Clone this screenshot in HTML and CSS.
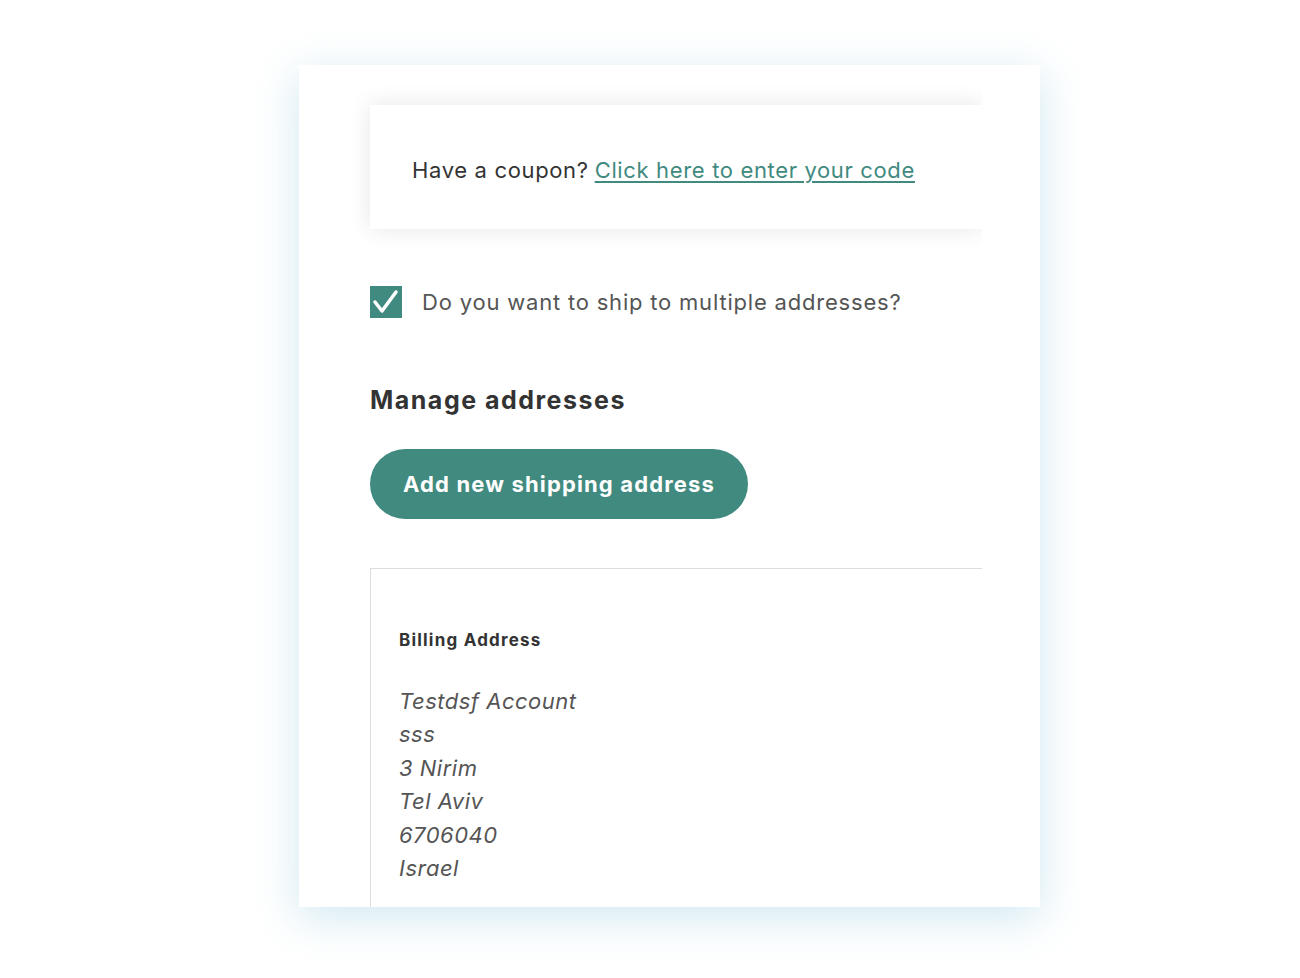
FILE: index.html
```html
<!DOCTYPE html>
<html lang="en">

<head>
  <meta charset="UTF-8">
  <title>Checkout - multiple addresses</title>
  <link rel="stylesheet" href="styles.css">
</head>

<body>
  <div id="frame">
    <div id="content">
      <div class="coupon">
        Have a coupon? <a href="#">Click here to enter your code</a>
      </div>

      <label class="multi">
        <span class="check">
          <svg width="32" height="32" viewBox="0 0 32 32">
            <polyline points="5,16 12,25 26,6" fill="none" stroke="#fff" stroke-width="3.5" stroke-linecap="round" stroke-linejoin="round" />
          </svg>
        </span>
        Do you want to ship to multiple addresses?
      </label>

      <h2>Manage addresses</h2>

      <button class="add">Add new shipping address</button>

      <div class="address">
        <h3>Billing Address</h3>
        <address>
          Testdsf Account<br>
          sss<br>
          3 Nirim<br>
          Tel Aviv<br>
          6706040<br>
          Israel
        </address>
      </div>
    </div>
  </div>
</body>

</html>
```

FILE: styles.css
```css
body {
  --teal: #418a80;
  --text: #555;
  --dark: #333;
  margin: 0;
  padding: 65px 0 71px;
  background: #fff;
  font-family: Inter, "Open Sans", sans-serif;
  color: var(--text);
}

#frame {
  width: 741px;
  height: 842px;
  margin-left: 299px;
  background: #fff;
  overflow: hidden;
  box-shadow: 0 10px 42px rgba(150, 205, 225, 0.45);
}

#content {
  width: 612px;
  height: 100%;
  padding: 40px 0 0 71px;
  overflow: hidden;
}

.coupon {
  width: 612px;
  height: 124px;
  display: flex;
  align-items: center;
  padding: 6px 0 0 42px;
  box-sizing: border-box;
  background: #fff;
  box-shadow: 0 0 22px rgba(0, 0, 0, 0.1);
  font-size: 22px;
  letter-spacing: 0.65px;
  color: var(--dark);
}

.coupon a {
  color: var(--teal);
  margin-left: 6px;
  text-underline-offset: 3px;
}

.multi {
  display: flex;
  align-items: center;
  gap: 20px;
  margin-top: 57px;
  font-size: 22px;
  letter-spacing: 0.8px;
}

.check {
  width: 32px;
  height: 32px;
  background: var(--teal);
  display: block;
}

.check svg {
  display: block;
}

h2 {
  margin: 67px 0 0;
  font-size: 25px;
  font-weight: 700;
  line-height: 30px;
  letter-spacing: 1.5px;
  color: var(--dark);
}

.add {
  display: block;
  margin-top: 34px;
  width: 378px;
  height: 70px;
  border: 0;
  border-radius: 35px;
  background: var(--teal);
  color: #fff;
  font-family: inherit;
  font-size: 22px;
  font-weight: 700;
  letter-spacing: 1.15px;
}

.address {
  margin-top: 49px;
  border-top: 1px solid #ddd;
  border-left: 1px solid #ddd;
  padding: 59px 0 40px 28px;
}

h3 {
  margin: 0;
  font-size: 17px;
  font-weight: 700;
  line-height: 24px;
  letter-spacing: 1.2px;
  color: var(--dark);
}

address {
  margin-top: 33px;
  font-size: 22px;
  line-height: 33.4px;
  letter-spacing: 0.5px;
}
```
